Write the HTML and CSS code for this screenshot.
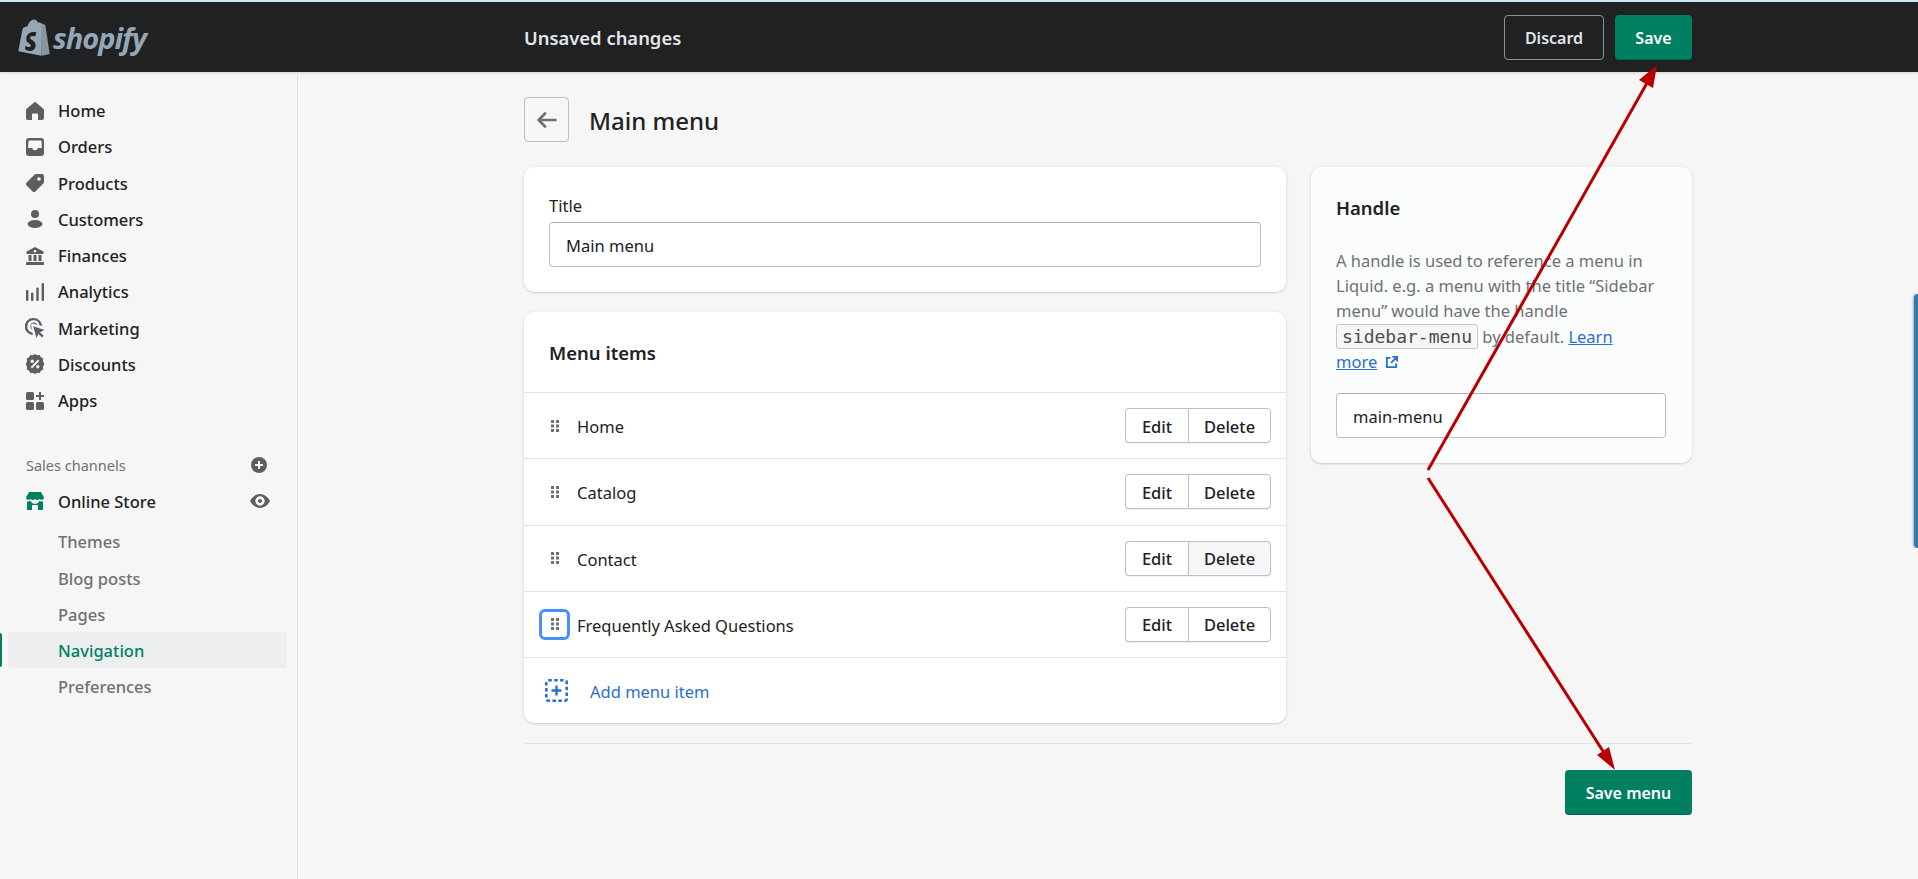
FILE: index.html
```html
<!DOCTYPE html>
<html lang="en">
<head>
<meta charset="utf-8">
<title>Main menu</title>
<link rel="stylesheet" href="styles.css">
</head>
<body>
<svg class="defs" width="0" height="0" aria-hidden="true">
  <symbol id="grip" viewBox="0 0 8 12"><g fill="#6d7175"><rect x="0" y="0" width="3" height="3"/><rect x="5" y="0" width="3" height="3"/><rect x="0" y="4.500" width="3" height="3"/><rect x="5" y="4.500" width="3" height="3"/><rect x="0" y="9" width="3" height="3"/><rect x="5" y="9" width="3" height="3"/></g></symbol>
</svg>
<header class="topbar">
  <div class="logo">
    <svg class="bag" viewBox="0 0 32 37" width="32" height="37"><path fill="#95a7b5" d="M21 3.200l-1.200.4C19 1.400 17.800.4 16.200.4 13 .4 10.500 3.700 9.500 7.300L5.900 8.400c-1.100.3-1.100.4-1.300 1.400L.3 32.200 23.700 36.700 24 4.500z"/><path fill="#84969f" d="M24 4.500l-.3 32.200 8-1.800L27.400 6.300c-.1-.3-.3-.5-.6-.5z"/><path fill="#202123" d="M18.300 13.800l-1.100 3.700s-1.300-.6-2.800-.5c-2.200.1-2.300 1.500-2.300 1.900.1 1.900 5.200 2.400 5.500 6.900.2 3.600-1.900 6-5 6.200-3.700.2-5.700-2-5.700-2l.8-3.300s2 1.500 3.700 1.400c1.100-.1 1.500-.9 1.400-1.500-.2-2.500-4.300-2.300-4.500-6.400-.2-3.400 2-6.900 7-7.200 1.900-.1 3 .4 3 .4z"/><path fill="none" stroke="#95a7b5" stroke-width="1.200" d="M11 8c1-4 3-6.300 5-6.300s3 2.300 3 5"/></svg>
    <span class="wordmark">shopify</span>
  </div>
  <div class="barmain">
    <span class="unsaved">Unsaved changes</span>
    <div class="baractions">
      <button class="btn-discard">Discard</button>
      <button class="btn-primary btn-save">Save</button>
    </div>
  </div>
</header>
<div class="shell">
  <nav class="sidebar">
    <ul class="navlist">
      <li class="navitem"><svg class="ico" viewBox="0 0 18 18"><path fill="#5c5f62" d="M18 8.300V16a2 2 0 0 1-2 2h-4v-5.500a1 1 0 0 0-1-1H7a1 1 0 0 0-1 1V18H2a2 2 0 0 1-2-2V8.300a2 2 0 0 1 .7-1.500L8 .4a1.500 1.500 0 0 1 2 0l7.300 6.400a2 2 0 0 1 .7 1.500z"/></svg>Home</li>
      <li class="navitem"><svg class="ico" viewBox="0 0 18 18"><path fill="#5c5f62" fill-rule="evenodd" d="M3 0h12a3 3 0 0 1 3 3v12a3 3 0 0 1-3 3H3a3 3 0 0 1-3-3V3a3 3 0 0 1 3-3zm.5 2.500a1 1 0 0 0-1 .8L2 10h3.500c.6 0 1 .4 1.200.9.3.8 1.200 1.400 2.300 1.400s2-.6 2.300-1.400c.2-.5.600-.9 1.200-.9H16l-.5-6.700a1 1 0 0 0-1-.8z"/></svg>Orders</li>
      <li class="navitem"><svg class="ico" viewBox="0 0 18 18"><path fill="#5c5f62" fill-rule="evenodd" d="M10 0h6a2 2 0 0 1 2 2v6a2 2 0 0 1-.6 1.400l-8 8a2 2 0 0 1-2.800 0L.6 11.400a2 2 0 0 1 0-2.800l8-8A2 2 0 0 1 10 0zm3 3.200a1.800 1.800 0 1 0 0 3.600 1.800 1.800 0 0 0 0-3.600z"/></svg>Products</li>
      <li class="navitem"><svg class="ico" viewBox="0 0 18 18"><circle cx="9" cy="4" r="4" fill="#5c5f62"/><ellipse cx="9" cy="14" rx="7.500" ry="4" fill="#5c5f62"/></svg>Customers</li>
      <li class="navitem"><svg class="ico" viewBox="0 0 18 18"><path fill="#5c5f62" fill-rule="evenodd" d="M9 0l8.500 4.500V7H.5V4.500zM9 3a1.300 1.300 0 1 0 0 2.600A1.300 1.300 0 0 0 9 3zM2.500 8h3v6h-3zm5 0h3v6h-3zm5 0h3v6h-3zM1 15h16a1 1 0 0 1 1 1v2H0v-2a1 1 0 0 1 1-1z"/></svg>Finances</li>
      <li class="navitem"><svg class="ico" viewBox="0 0 18 18"><g fill="#5c5f62"><rect x="0" y="7" width="2.400" height="11" rx="1"/><rect x="5" y="9.500" width="2.400" height="8.500" rx="1"/><rect x="10.300" y="4.500" width="2.400" height="13.500" rx="1"/><rect x="15.600" y="0" width="2.400" height="18" rx="1"/></g></svg>Analytics</li>
      <li class="navitem"><svg class="ico ico-lg" viewBox="0 0 20 20"><path fill="#5c5f62" d="M8.500 0a8.500 8.500 0 0 1 8.500 8l-2.400-.8A6.200 6.200 0 1 0 7.300 14.600L8 17A8.500 8.500 0 0 1 8.500 0z"/><path fill="#5c5f62" d="M8.500 4.200a4.300 4.300 0 0 1 4 2.700l-2.800-.9a2.300 2.300 0 0 0-3.200 3.200l.9 2.800a4.300 4.300 0 0 1 1.100-7.800z"/><path fill="#5c5f62" d="M8.200 8.200l11.300 3.700-4.500 2.300 3.600 3.600-1.600 1.600-3.500-3.500-2 4.100z"/></svg>Marketing</li>
      <li class="navitem"><svg class="ico ico-lg" viewBox="0 0 20 20"><path fill="#5c5f62" fill-rule="evenodd" d="M10 0l2.200 1.300 2.600-.3 1.100 2.300 2.300 1.200-.3 2.600L19.300 10l-1.400 2.900.3 2.600-2.300 1.200-1.100 2.300-2.600-.3L10 20l-2.200-1.300-2.600.3-1.100-2.300-2.300-1.200.3-2.600L.7 10l1.400-2.900-.3-2.600 2.300-1.200L5.200 1l2.600.3zM7.200 5.500a1.700 1.700 0 1 0 0 3.400 1.700 1.700 0 0 0 0-3.400zm5.600 5.600a1.700 1.700 0 1 0 0 3.400 1.700 1.700 0 0 0 0-3.400zM13 5.600L5.700 13l1.300 1.400L14.400 7z"/></svg>Discounts</li>
      <li class="navitem"><svg class="ico" viewBox="0 0 18 18"><g fill="#5c5f62"><rect x="0" y="0" width="8" height="8" rx="1.500"/><rect x="0" y="10" width="8" height="8" rx="1.500"/><rect x="10" y="10" width="8" height="8" rx="1.500"/><path d="M13 0h2v3h3v2h-3v3h-2V5h-3V3h3z"/></g></svg>Apps</li>
    </ul>
    <div class="channels-head"><span>Sales channels</span><svg class="mini" viewBox="0 0 16 16"><path fill="#5c5f62" fill-rule="evenodd" d="M8 0a8 8 0 1 1 0 16A8 8 0 0 1 8 0zM7 4v3H4v2h3v3h2V9h3V7H9V4z"/></svg></div>
    <div class="navitem store"><svg class="ico" viewBox="0 0 18 18"><path fill="#008060" d="M3 0h12l3 5.500a2.600 2.600 0 0 1-4.500 1.500A3 3 0 0 1 9 7a3 3 0 0 1-4.500 0A2.600 2.600 0 0 1 0 5.500z"/><path fill="#008060" d="M1 9.300a4 4 0 0 0 3.500-.6 4.800 4.800 0 0 0 9 0 4 4 0 0 0 3.500.6V18h-5v-4a1 1 0 0 0-1-1H7a1 1 0 0 0-1 1v4H1z"/></svg><span class="grow">Online Store</span><svg class="eye" viewBox="0 0 20 14"><path fill="#5c5f62" fill-rule="evenodd" d="M10 0c5 0 8.500 4 10 7-1.500 3-5 7-10 7S1.500 10 0 7c1.500-3 5-7 10-7zm0 2.300a4.700 4.700 0 1 0 0 9.400 4.700 4.700 0 0 0 0-9.400zM10 5a2 2 0 1 1 0 4 2 2 0 0 1 0-4z"/></svg></div>
    <ul class="sublist">
      <li class="subitem">Themes</li>
      <li class="subitem">Blog posts</li>
      <li class="subitem">Pages</li>
      <li class="subitem active">Navigation</li>
      <li class="subitem">Preferences</li>
    </ul>
  </nav>
  <main class="content">
    <div class="pagehead">
      <button class="back" aria-label="Back"><svg viewBox="0 0 20 16" width="20" height="16"><path fill="none" stroke="#6d7175" stroke-width="2.700" stroke-linecap="round" stroke-linejoin="round" d="M8 1.500L1.700 8 8 14.500M2 8h16.500"/></svg></button>
      <h1 class="pagetitle">Main menu</h1>
    </div>
    <div class="columns">
      <div class="leftcol">
        <section class="card titlecard">
          <label class="fieldlabel">Title</label>
          <div class="input">Main menu</div>
        </section>
        <section class="card menucard">
          <h2 class="cardtitle menutitle">Menu items</h2>
          <div class="row"><span class="grip"><svg width="8" height="12"><use href="#grip"/></svg></span><span class="rowlabel">Home</span><div class="btngroup"><button>Edit</button><button>Delete</button></div></div>
          <div class="row"><span class="grip"><svg width="8" height="12"><use href="#grip"/></svg></span><span class="rowlabel">Catalog</span><div class="btngroup"><button>Edit</button><button>Delete</button></div></div>
          <div class="row"><span class="grip"><svg width="8" height="12"><use href="#grip"/></svg></span><span class="rowlabel">Contact</span><div class="btngroup"><button>Edit</button><button class="hover">Delete</button></div></div>
          <div class="row"><span class="grip focus"><svg width="8" height="12"><use href="#grip"/></svg></span><span class="rowlabel">Frequently Asked Questions</span><div class="btngroup"><button>Edit</button><button>Delete</button></div></div>
          <div class="addrow"><svg class="addicon" viewBox="0 0 23 23" width="23" height="23"><rect x="1.300" y="1.300" width="20.400" height="20.400" rx="2" fill="none" stroke="#2c6ecb" stroke-width="2.600" stroke-dasharray="3.500 2.400"/><path fill="#2c6ecb" d="M10.300 6.500h2.400v3.800h3.800v2.400h-3.800v3.800h-2.400v-3.800H6.500v-2.400h3.800z"/></svg><span class="addlabel">Add menu item</span></div>
        </section>
      </div>
      <aside class="card handlecard">
        <h2 class="cardtitle handletitle">Handle</h2>
        <p class="help">A handle is used to reference a menu in Liquid. e.g. a menu with the title “Sidebar menu” would have the handle <code>sidebar-menu</code> by default. <a href="#">Learn<br>more</a> <svg class="ext" viewBox="0 0 14 14" width="13" height="13"><path fill="none" stroke="#2c6ecb" stroke-width="2" d="M6 2H2v10h10V8M8 1h5v5M13 1L6.500 7.500"/></svg></p>
        <div class="input handleinput">main-menu</div>
      </aside>
    </div>
    <div class="footer">
      <button class="btn-primary btn-savemenu">Save menu</button>
    </div>
  </main>
</div>
<div class="sidetab"></div>
<svg class="arrows" viewBox="0 0 1918 879" width="1918" height="879" aria-hidden="true">
  <g stroke="#b80000" stroke-width="3" fill="#b80000">
    <path d="M1428 470L1651 76"/>
    <path d="M1428 478L1608 759"/>
  </g>
  <path fill="#b80000" d="M1657 65L1653 88 1639 80z"/>
  <path fill="#b80000" d="M1615 770L1597 755 1609 747z"/>
</svg>
</body>
</html>
```
FILE: styles.css
```css
* { box-sizing: border-box; }
html, body { margin: 0; height: 879px; overflow: hidden; }
body {
  background: #f6f6f7;
  font-family: "Noto Sans", "Open Sans", sans-serif;
  font-size: 16px;
  color: #202223;
  position: relative;
}
.defs { position: absolute; }
ul { list-style: none; margin: 0; padding: 0; }
button { font-family: inherit; cursor: pointer; }

.topbar {
  height: 72px;
  border-top: 2px solid #c4eaf3;
  background: #202123;
  display: flex;
  align-items: center;
  box-shadow: 0 1px 3px rgba(0,0,0,.15);
}
.logo { width: 524px; display: flex; align-items: center; padding-left: 18px; gap: 3px; }
.bag { flex: none; }
.wordmark {
  font-family: "Open Sans", sans-serif;
  font-size: 29px;
  font-weight: 700;
  font-style: italic;
  color: #95a7b5;
  letter-spacing: -1px;
}
.barmain { width: 1168px; display: flex; align-items: center; justify-content: space-between; }
.unsaved { font-size: 18.400px; font-weight: 600; color: #e3e5e7; padding-top: 1px; }
.baractions { display: flex; gap: 11px; }
.btn-discard {
  width: 100px; height: 45px;
  background: transparent;
  border: 1px solid #8c9196;
  border-radius: 4px;
  color: #e3e5e7;
  font-size: 16px; font-weight: 600;
  padding: 1px 0 0;
}
.btn-primary {
  height: 45px;
  background: #008060;
  border: 0;
  border-radius: 4px;
  color: #fff;
  font-size: 16px; font-weight: 600;
  padding: 1px 0 0;
  box-shadow: inset 0 -1px 0 rgba(0,0,0,.2);
}
.btn-save { width: 77px; }
.btn-savemenu { width: 127px; }

.shell { display: flex; height: 807px; }
.sidebar {
  width: 298px;
  flex: none;
  border-right: 1px solid #e1e3e5;
  padding-top: 20px;
}
.navlist { margin-bottom: 28px; }
.navitem {
  height: 36.250px;
  display: flex;
  align-items: center;
  padding-left: 26px;
  padding-top: 1px;
  font-size: 16.500px;
  font-weight: 500;
  color: #202223;
}
.ico { width: 18px; height: 18px; margin-right: 14px; flex: none; }
.ico-lg { width: 20px; height: 20px; margin-left: -1px; margin-right: 13px; }
.channels-head {
  height: 36px;
  display: flex;
  align-items: center;
  justify-content: space-between;
  padding: 1px 30px 0 26px;
  font-size: 14.500px;
  color: #6d7175;
}
.mini { width: 16px; height: 16px; }
.store { height: 37px; padding-right: 27px; }
.grow { flex: 1; }
.eye { width: 20px; height: 14px; }
.sublist { margin-top: 4px; }
.subitem {
  height: 36.250px;
  display: flex;
  align-items: center;
  padding-left: 58px;
  padding-top: 1px;
  font-size: 16.500px;
  font-weight: 500;
  color: #6d7175;
  position: relative;
}
.subitem.active {
  color: #008060;
  background: #edeef0;
  border-radius: 4px;
  margin: 0 10px 0 8px;
  padding-left: 50px;
}
.subitem.active::before {
  content: "";
  position: absolute;
  left: -8px; top: 1px; bottom: 1px;
  width: 2px;
  background: #008060;
  border-radius: 0 2px 2px 0;
}

.content { width: 1168px; margin-left: 226px; flex: none; padding-top: 25px; }
.pagehead { display: flex; align-items: center; gap: 20px; height: 45px; margin-bottom: 25px; }
.back {
  width: 45px; height: 45px;
  background: transparent;
  border: 1px solid #babfc3;
  border-radius: 4px;
  display: flex; align-items: center; justify-content: center;
  padding: 0;
}
.pagetitle { margin: 0; font-size: 24px; font-weight: 500; line-height: 1; padding-top: 3px; }
.columns { display: flex; gap: 25px; align-items: flex-start; }
.leftcol { width: 762px; display: flex; flex-direction: column; gap: 20px; }
.card {
  background: #fff;
  border-radius: 10px;
  box-shadow: 0 0 5px rgba(23,24,24,.05), 0 1px 2px rgba(0,0,0,.15);
}
.titlecard { height: 125px; padding: 25px 25px 0; }
.fieldlabel { display: block; font-size: 16.500px; line-height: 24px; margin-bottom: 4px; margin-top: 2px; }
.input {
  height: 45px;
  border: 1px solid #babfc3;
  border-top-color: #aeb4b9;
  border-radius: 4px;
  background: #fff;
  display: flex; align-items: center;
  padding: 1px 0 0 16px;
  font-size: 16.500px;
}
.menucard { height: 411px; }
.cardtitle { margin: 0; font-size: 18.500px; font-weight: 600; line-height: 26px; }
.menutitle { height: 80px; padding: 28px 25px 0; }
.row {
  height: 66.250px;
  border-top: 1px solid #e1e3e5;
  display: flex; align-items: center;
  padding: 0 15px;
}
.grip {
  width: 31px; height: 31px;
  border: 2px solid transparent;
  border-radius: 6px;
  display: flex; align-items: center; justify-content: center;
  flex: none;
}
.grip svg { display: block; }
.grip.focus { border: 3px solid #458fff; }
.rowlabel { flex: 1; margin-left: 7px; padding-top: 2px; font-size: 16.500px; }
.btngroup { display: flex; }
.btngroup button {
  height: 35px;
  background: #fff;
  border: 1px solid #babfc3;
  font-size: 16.500px;
  font-weight: 500;
  color: #202223;
  padding: 1px 0 0;
  box-shadow: 0 1px 0 rgba(0,0,0,.05);
}
.btngroup button:first-child { width: 63px; border-radius: 4px 0 0 4px; border-right: 0; }
.btngroup button:last-child { width: 83px; border-radius: 0 4px 4px 0; }
.btngroup button.hover { background: #f6f6f7; }
.addrow {
  height: 66px;
  border-top: 1px solid #e1e3e5;
  display: flex; align-items: center;
  padding-left: 21px;
}
.addicon { flex: none; }
.addlabel { margin-left: 22px; padding-top: 2px; color: #2c6ecb; font-size: 16.500px; }

.handlecard { width: 381px; height: 296px; padding: 28px 25px 0; background: #fbfcfc; }
.help { margin: 27px 0 0; height: 145px; font-size: 16.500px; line-height: 25.200px; color: #6d7175; }
.help code {
  font-family: "DejaVu Sans Mono", monospace;
  font-size: 18px;
  line-height: 1;
  white-space: nowrap;
  background: #f6f6f7;
  border: 1px solid #c4c7ca;
  border-radius: 3px;
  padding: 1px 5px;
  color: #4a4d50;
}
.help a { color: #2c6ecb; }
.ext { vertical-align: -1px; margin-left: 3px; }
.handleinput { width: 330px; }

.footer {
  margin-top: 20px;
  border-top: 1px solid #e1e3e5;
  padding-top: 26px;
  display: flex;
  justify-content: flex-end;
}

.sidetab {
  position: absolute;
  right: 0; top: 294px;
  width: 4px; height: 254px;
  background: #2c7cb5;
  border-radius: 4px 0 0 4px;
  box-shadow: -1px 0 2px rgba(0,0,0,.3);
}
.arrows { position: absolute; left: 0; top: 0; pointer-events: none; }
```
